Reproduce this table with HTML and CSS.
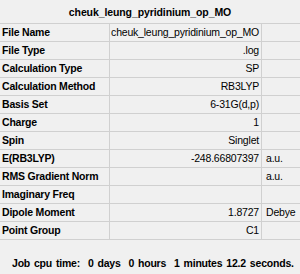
FILE: index.html
```html
<!DOCTYPE html>
<html>
<head>
<meta charset="utf-8">
<link rel="stylesheet" href="styles.css">
</head>
<body>
<div class="panel">
  <div class="title">cheuk_leung_pyridinium_op_MO</div>
  <div class="grid">
    <div class="lbl">File Name</div><div class="val">cheuk_leung_pyridinium_op_MO</div><div class="unit"></div>
    <div class="lbl">File Type</div><div class="val">.log</div><div class="unit"></div>
    <div class="lbl">Calculation Type</div><div class="val">SP</div><div class="unit"></div>
    <div class="lbl">Calculation Method</div><div class="val">RB3LYP</div><div class="unit"></div>
    <div class="lbl">Basis Set</div><div class="val">6-31G(d,p)</div><div class="unit"></div>
    <div class="lbl">Charge</div><div class="val">1</div><div class="unit"></div>
    <div class="lbl">Spin</div><div class="val">Singlet</div><div class="unit"></div>
    <div class="lbl">E(RB3LYP)</div><div class="val">-248.66807397</div><div class="unit">a.u.</div>
    <div class="lbl">RMS Gradient Norm</div><div class="val"></div><div class="unit">a.u.</div>
    <div class="lbl">Imaginary Freq</div><div class="val"></div><div class="unit"></div>
    <div class="lbl">Dipole Moment</div><div class="val">1.8727</div><div class="unit">Debye</div>
    <div class="lbl">Point Group</div><div class="val">C1</div><div class="unit"></div>
  </div>
  <div class="footer">Job cpu time:&nbsp; 0 days&nbsp; 0 hours&nbsp; 1 minutes 12.2 seconds.</div>
</div>
</body>
</html>
```
FILE: styles.css
```css
html, body {
  margin: 0;
  padding: 0;
  background: #f0f0f0;
}

.panel {
  width: 300px;
  height: 274px;
  font-family: "Liberation Sans", Arial, sans-serif;
  font-size: 10.5px;
  letter-spacing: -0.2px;
  color: #000;
  display: flex;
  flex-direction: column;
}

.title {
  height: 23px;
  line-height: 24px;
  text-align: center;
  font-weight: bold;
  letter-spacing: -0.1px;
}

.grid {
  display: grid;
  grid-template-columns: 110px 152px 38px;
  grid-auto-rows: 18px;
  border-top: 1px solid #d0d0d0;
}

.grid > div {
  border-bottom: 1px solid #d0d0d0;
  line-height: 17px;
  white-space: nowrap;
  overflow: hidden;
}

.lbl {
  font-weight: bold;
  padding-left: 2px;
  border-right: 1px solid #d0d0d0;
}

.val {
  text-align: right;
  padding-right: 2px;
  border-right: 1px solid #d0d0d0;
}

.unit {
  padding-left: 4px;
}

.footer {
  margin-top: 17px;
  padding-left: 12px;
  font-weight: bold;
  white-space: nowrap;
  word-spacing: 1.2px;
}
```
